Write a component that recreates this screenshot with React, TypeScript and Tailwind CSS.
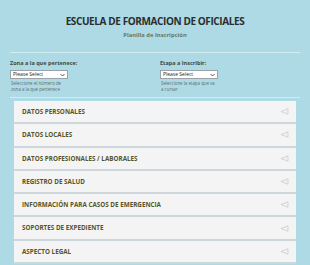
import React from 'react';

const sections = [
  'DATOS PERSONALES',
  'DATOS LOCALES',
  'DATOS PROFESIONALES / LABORALES',
  'REGISTRO DE SALUD',
  'INFORMACIÓN PARA CASOS DE EMERGENCIA',
  'SOPORTES DE EXPEDIENTE',
  'ASPECTO LEGAL',
];

const Field: React.FC<{ label: string; help: string[] }> = ({ label, help }) => (
  <div className="flex flex-col">
    <label className="text-[5.5px] font-bold text-[#3e4a3a] leading-[7px]">{label}</label>
    <div className="mt-[3px] w-[58px] h-[9px] bg-white border border-[#9aa3a8] flex items-center justify-between px-[2px]">
      <span className="text-[5px] text-[#222] leading-none">Please Select</span>
      <svg width="5" height="4" viewBox="0 0 10 8" className="text-[#333]">
        <path d="M1 2 L5 6 L9 2" fill="none" stroke="currentColor" strokeWidth="1.6" />
      </svg>
    </div>
    <div className="mt-[2px] pl-[1px] text-[4.4px] leading-[5.5px] text-[#5f6d6a]">
      {help.map((h, i) => (
        <div key={i}>{h}</div>
      ))}
    </div>
  </div>
);

const AccordionItem: React.FC<{ title: string }> = ({ title }) => (
  <div className="h-[23.3px] bg-[#f4f4f4] border-b-[2px] border-[#cdd7dc] flex items-center justify-between pl-[8px] pr-[7px]">
    <span className="text-[6.3px] font-bold text-[#56552a]">{title}</span>
    <svg width="9" height="7" viewBox="0 0 18 14">
      <path d="M16 1.5 L2 7 L16 12.5 Z" fill="#f0f0f0" stroke="#c9c9c9" strokeWidth="1.4" strokeLinejoin="round" />
    </svg>
  </div>
);

export default function App() {
  return (
    <div
      className="w-[310px] h-[265px] overflow-hidden bg-[#aedae6]"
      style={{ fontFamily: '"Open Sans", "Liberation Sans", sans-serif' }}
    >
      <div className="pt-[14px] flex flex-col items-center">
        <h1 className="text-[10px] font-bold text-[#2a2e2e] leading-[14px] tracking-[-0.4px]">
          ESCUELA DE FORMACION DE OFICIALES
        </h1>
        <p className="mt-[4px] text-[5.8px] font-bold text-[#6a7560] leading-[7px]">Planilla de Inscripción</p>
      </div>
      <div className="mx-[10px] mt-[13px] h-px bg-[#d2ecf2]" />
      <div className="grid grid-cols-[150px_1fr] px-[10px] pt-[7px]">
        <Field label="Zona a la que pertenece:" help={['Seleccione el número de', 'zona a la que pertenece']} />
        <Field label="Etapa a Inscribir:" help={['Seleccione la etapa que va', 'a cursar']} />
      </div>
      <div className="mx-[10px] mt-[5px] h-px bg-[#d2ecf2]" />
      <div className="mx-[14px] mt-[3px] flex flex-col">
        {sections.map((s) => (
          <AccordionItem key={s} title={s} />
        ))}
      </div>
    </div>
  );
}
